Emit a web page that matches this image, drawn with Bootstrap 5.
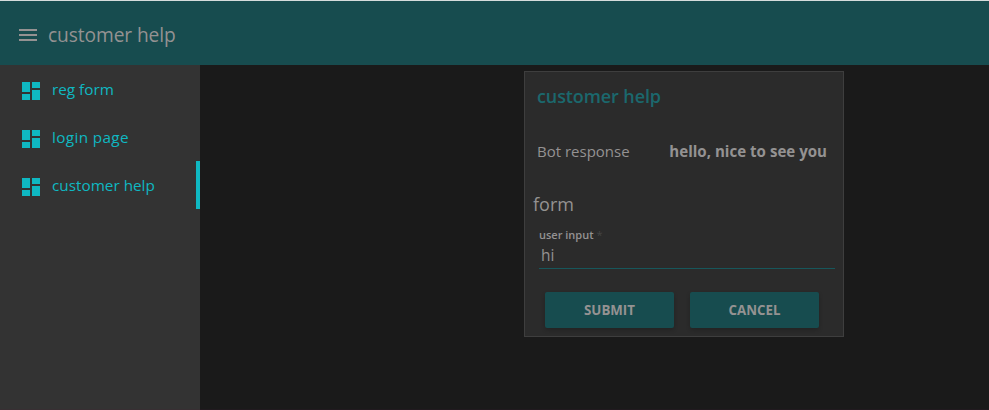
<!DOCTYPE html>
<html lang="en">
<head>
<meta charset="utf-8">
<title>customer help</title>
<link href="https://cdn.jsdelivr.net/npm/bootstrap@5.3.0/dist/css/bootstrap.min.css" rel="stylesheet">
<style>
body{background:#1a1a1a;color:#949292;font-family:"Open Sans","Noto Sans",sans-serif;font-size:15px;line-height:24px}
.shell{border-top:1px solid #d5dcdc}
.topbar{background:#174c4f;height:64px;padding:4px 16px 0}
.topbar-title{font-size:19.2px;letter-spacing:-.1px;margin:-1px 0 0 8px}
.side{width:200px;background:#333;border-bottom:1px solid #382f33}
.side-link{height:48px;padding:0 0 0 19px;color:#0fb8c2;border-right:4px solid transparent;font-size:15.3px}
.side-link:hover{color:#0fb8c2}
.side-link.current{border-right-color:#0fb8c2}
.side-link,.entry .form-control,.action{transition:none}
.side-link span{margin-left:9px}
.side-link .roomy{letter-spacing:.35px}
.glyph{width:24px;height:24px;fill:currentColor;flex:none}
.workspace{padding:6px 0 0 324px;border-bottom:1px solid #211a1f}
.panel{width:320px;height:266px;background:#2b2b2b;border:1px solid #3e3e3e;border-radius:0;color:#949292}
.panel-title{color:#1b686d;font-size:18px;font-weight:600;letter-spacing:-.1px;line-height:24px;margin:12px 0 0 12px}
.reply{margin:31px 16px 0 12px}
.answer{font-size:15.1px}
.form-title{font-size:18px;font-weight:400;line-height:24px;margin:29px 0 0 8px}
.entry{margin:12px 8px 0 14px}
.entry label{font-size:11px;line-height:14px;font-weight:600;height:14px}
.entry .form-control{background:transparent;border:0;border-bottom:1px solid #17575b;border-radius:0;color:#949292;padding:0 2px 1px;height:27px;font-size:15.5px;line-height:24px;box-shadow:none}
.star{color:#454545;font-weight:400}
.actions{gap:16px;margin:23px 0 0 20px}
.action{width:129px;height:36px;background:#174c4f;color:#949292;border:0;border-radius:2px;padding:0;font-size:13.3px;font-weight:700;line-height:36px;box-shadow:0 2px 4px #0003}
</style>
</head>
<body>
<div class="shell d-flex flex-column vh-100 overflow-hidden">
  <header class="topbar d-flex align-items-center flex-shrink-0">
    <svg class="glyph" viewBox="0 0 24 24"><path d="M3 18h18v-2H3v2zm0-5h18v-2H3v2zm0-7v2h18V6H3z"/></svg>
    <span class="topbar-title">customer help</span>
  </header>
  <div class="d-flex flex-grow-1">
    <nav class="side nav flex-column flex-nowrap flex-shrink-0">
      <a class="side-link nav-link d-flex align-items-center" href="#"><svg class="glyph mt-1" viewBox="0 0 24 24"><path d="M3 13h8V3H3v10zm0 8h8v-6H3v6zm10 0h8V11h-8v10zm0-18v6h8V3h-8z"/></svg><span>reg form</span></a>
      <a class="side-link nav-link d-flex align-items-center" href="#"><svg class="glyph mt-1" viewBox="0 0 24 24"><path d="M3 13h8V3H3v10zm0 8h8v-6H3v6zm10 0h8V11h-8v10zm0-18v6h8V3h-8z"/></svg><span class="roomy">login page</span></a>
      <a class="side-link nav-link current d-flex align-items-center" href="#"><svg class="glyph mt-1" viewBox="0 0 24 24"><path d="M3 13h8V3H3v10zm0 8h8v-6H3v6zm10 0h8V11h-8v10zm0-18v6h8V3h-8z"/></svg><span>customer help</span></a>
    </nav>
    <main class="workspace flex-grow-1">
      <section class="panel card">
        <h1 class="panel-title">customer help</h1>
        <div class="reply d-flex justify-content-between"><span>Bot response</span><strong class="answer">hello, nice to see you</strong></div>
        <h2 class="form-title mb-0">form</h2>
        <div class="entry d-flex flex-column">
          <label for="msg">user input <span class="star">*</span></label>
          <input class="form-control" id="msg" value="hi">
        </div>
        <div class="actions d-flex"><button class="btn action">SUBMIT</button><button class="btn action">CANCEL</button></div>
      </section>
    </main>
  </div>
</div>
<script src="https://cdn.jsdelivr.net/npm/bootstrap@5.3.0/dist/js/bootstrap.bundle.min.js"></script>
</body>
</html>
